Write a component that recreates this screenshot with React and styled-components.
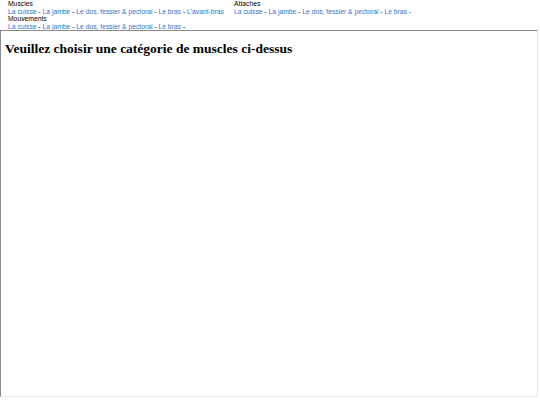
import React from 'react'
import styled, { createGlobalStyle } from 'styled-components'

const GlobalStyle = createGlobalStyle`
  html, body {
    margin: 0;
    padding: 0;
    background: #fff;
  }
`

const Page = styled.div`
  width: 540px;
  height: 405px;
  display: flex;
  flex-direction: column;
  overflow: hidden;
`

const Menu = styled.div`
  display: grid;
  grid-template-columns: 226px 1fr;
  padding: 0 0 0 8px;
  height: 30px;
  box-sizing: border-box;
  font-family: "Liberation Sans", Arial, sans-serif;
  font-size: 6.75px;
  line-height: 7.5px;
  color: #000;
`

const Group = styled.div`
  display: flex;
  flex-direction: column;
`

const Title = styled.div`
  color: #000;
`

const Links = styled.div`
  white-space: nowrap;
`

const Link = styled.a`
  color: #2f74d0;
  text-decoration: none;
`

const Frame = styled.div`
  width: 538px;
  height: 367px;
  box-sizing: border-box;
  border-style: solid;
  border-width: 1px;
  border-color: #8a8a8a #e8e8e8 #e8e8e8 #8a8a8a;
  padding: 3px 0 0 4px;
`

const Heading = styled.h1`
  margin: 7px 0 0 0;
  font-family: "Liberation Serif", "Times New Roman", serif;
  font-weight: bold;
  font-size: 13.5px;
  line-height: 15px;
  color: #000;
`

const LinkList = ({ items, trailing }) => (
  <Links>
    {items.map((item, i) => (
      <React.Fragment key={item}>
        {i > 0 && ' - '}
        <Link href="#">{item}</Link>
      </React.Fragment>
    ))}
    {trailing && ' -'}
  </Links>
)

const base = ['La cuisse', 'La jambe', 'Le dos, fessier & pectoral', 'Le bras']

export default function App() {
  return (
    <>
      <GlobalStyle />
      <Page>
        <Menu>
          <Group>
            <Title>Muscles</Title>
            <LinkList items={[...base, "L'avant-bras"]} />
            <Title>Mouvements</Title>
            <LinkList items={base} trailing />
          </Group>
          <Group>
            <Title>Attaches</Title>
            <LinkList items={base} trailing />
          </Group>
        </Menu>
        <Frame>
          <Heading>Veuillez choisir une catégorie de muscles ci-dessus</Heading>
        </Frame>
      </Page>
    </>
  )
}
